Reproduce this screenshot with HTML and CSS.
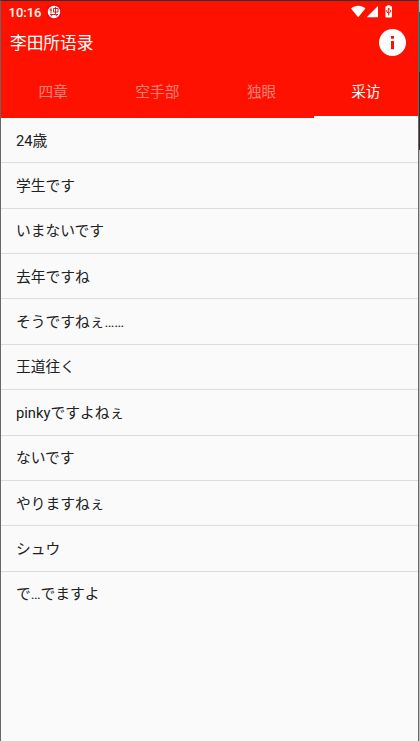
FILE: index.html
```html
<!DOCTYPE html>
<html lang="ja">
<head>
    <meta charset="UTF-8">
    <meta name="viewport" content="width=device-width, initial-scale=1.0">
    <title>李田所语录</title>
    <link rel="stylesheet" href="styles.css">
</head>
<body>
    <div class="phone">
        <header lang="zh-CN">
            <div class="status">
                <span class="time">10:16</span>
                <svg class="notice" width="14" height="14" viewBox="0 0 14 14">
                    <rect width="14" height="14" rx="2" fill="#e80c14"/>
                    <circle cx="7" cy="7" r="6.2" fill="#fff"/>
                    <path d="M4 3v5.500M2.500 5h2.500M6.500 3.500h4.500v3.500H6.500zM8.500 2v7M3 9.500h8M5 10l-1 1.500M9 10l1 1.500" fill="none" stroke="#c8101c" stroke-width=".9"/>
                </svg>
                <svg class="signals" width="42" height="14" viewBox="0 0 42 14">
                    <path d="M0 3.400C4-.1 10.400-.1 14.400 3.400L7.200 12.300z"/>
                    <path d="M27 1v11.300H15.700z"/>
                    <path d="M35.200 1.300h1v-1h3v1h1q.8 0 .8.800v9.500q0 .8-.8.800h-5q-.8 0-.8-.8V2.100q0-.8.800-.8z"/>
                    <path class="usb" d="M37.700 3v7.500M35.800 5v2l1.900 1.300L39.600 7V5M36.700 4h2"/>
                </svg>
            </div>
            <div class="title">
                <h1>李田所语录</h1>
                <svg class="info" width="28" height="28" viewBox="0 0 28 28">
                    <circle cx="13.500" cy="13.500" r="13.500"/>
                    <path class="mark" d="M12 7h3v2.800h-3zM12 12h3v8.300h-3z"/>
                </svg>
            </div>
            <nav>
                <a>四章</a>
                <a>空手部</a>
                <a>独眼</a>
                <a class="active">采访</a>
            </nav>
        </header>
        <ul>
            <li>24歳</li>
            <li>学生です</li>
            <li>いまないです</li>
            <li>去年ですね</li>
            <li>そうですねぇ……</li>
            <li>王道往く</li>
            <li>pinkyですよねぇ</li>
            <li>ないです</li>
            <li>やりますねぇ</li>
            <li>シュウ</li>
            <li>で…でますよ</li>
        </ul>
    </div>
</body>
</html>
```

FILE: styles.css
```css
*{
    box-sizing: border-box;
}
body{
    margin: 0;
    height: 741px;
    overflow: hidden;
    background: linear-gradient(#b5b5b5 0 12px, #146b58 12px 72px, #33292b 72px 150px, #c4c4c4 150px);
    font-family: Roboto, "Noto Sans CJK SC", sans-serif;
}
.phone{
    width: 419px;
    height: 741px;
    background: #fafafa;
    border-left: 1px solid #666;
    border-right: 1px solid #666;
    border-top: 1px solid #30303a;
}
header{
    height: 117px;
    background: #ff1100;
    color: #fff;
}
.status{
    display: flex;
    align-items: center;
    height: 22px;
    padding: 0 25px 0 7.5px;
}
.time{
    font-size: 13px;
    font-weight: 500;
    width: 38px;
}
.signals{
    margin-left: auto;
    fill: #fff;
}
.signals .usb{
    fill: none;
    stroke: #ff1100;
    stroke-width: 1;
}
.title{
    display: flex;
    align-items: center;
    justify-content: space-between;
    height: 39px;
    padding: 0 11px 0 9px;
}
h1{
    margin: 0;
    padding-bottom: 2px;
    font-size: 16.7px;
    font-weight: 400;
}
.info{
    fill: #fff;
}
.info .mark{
    fill: #ff1100;
}
nav{
    display: grid;
    grid-template-columns: repeat(4, 1fr);
    height: 56px;
}
nav a{
    display: flex;
    align-items: center;
    justify-content: center;
    padding-top: 3px;
    font-size: 14.7px;
    color: #ff8078;
    border-bottom: 2px solid transparent;
}
nav a.active{
    color: #fff;
    border-bottom-color: #fff;
}
ul{
    list-style: none;
    margin: 0;
    padding: 0;
    font-family: Roboto, "Noto Sans CJK JP", sans-serif;
}
li{
    display: flex;
    align-items: center;
    height: 45.37px;
    padding: 0 0 2px 15px;
    font-size: 14.75px;
    color: #212121;
    border-bottom: 1px solid #dcdcdc;
}
li:last-child{
    border-bottom-color: transparent;
}
```
